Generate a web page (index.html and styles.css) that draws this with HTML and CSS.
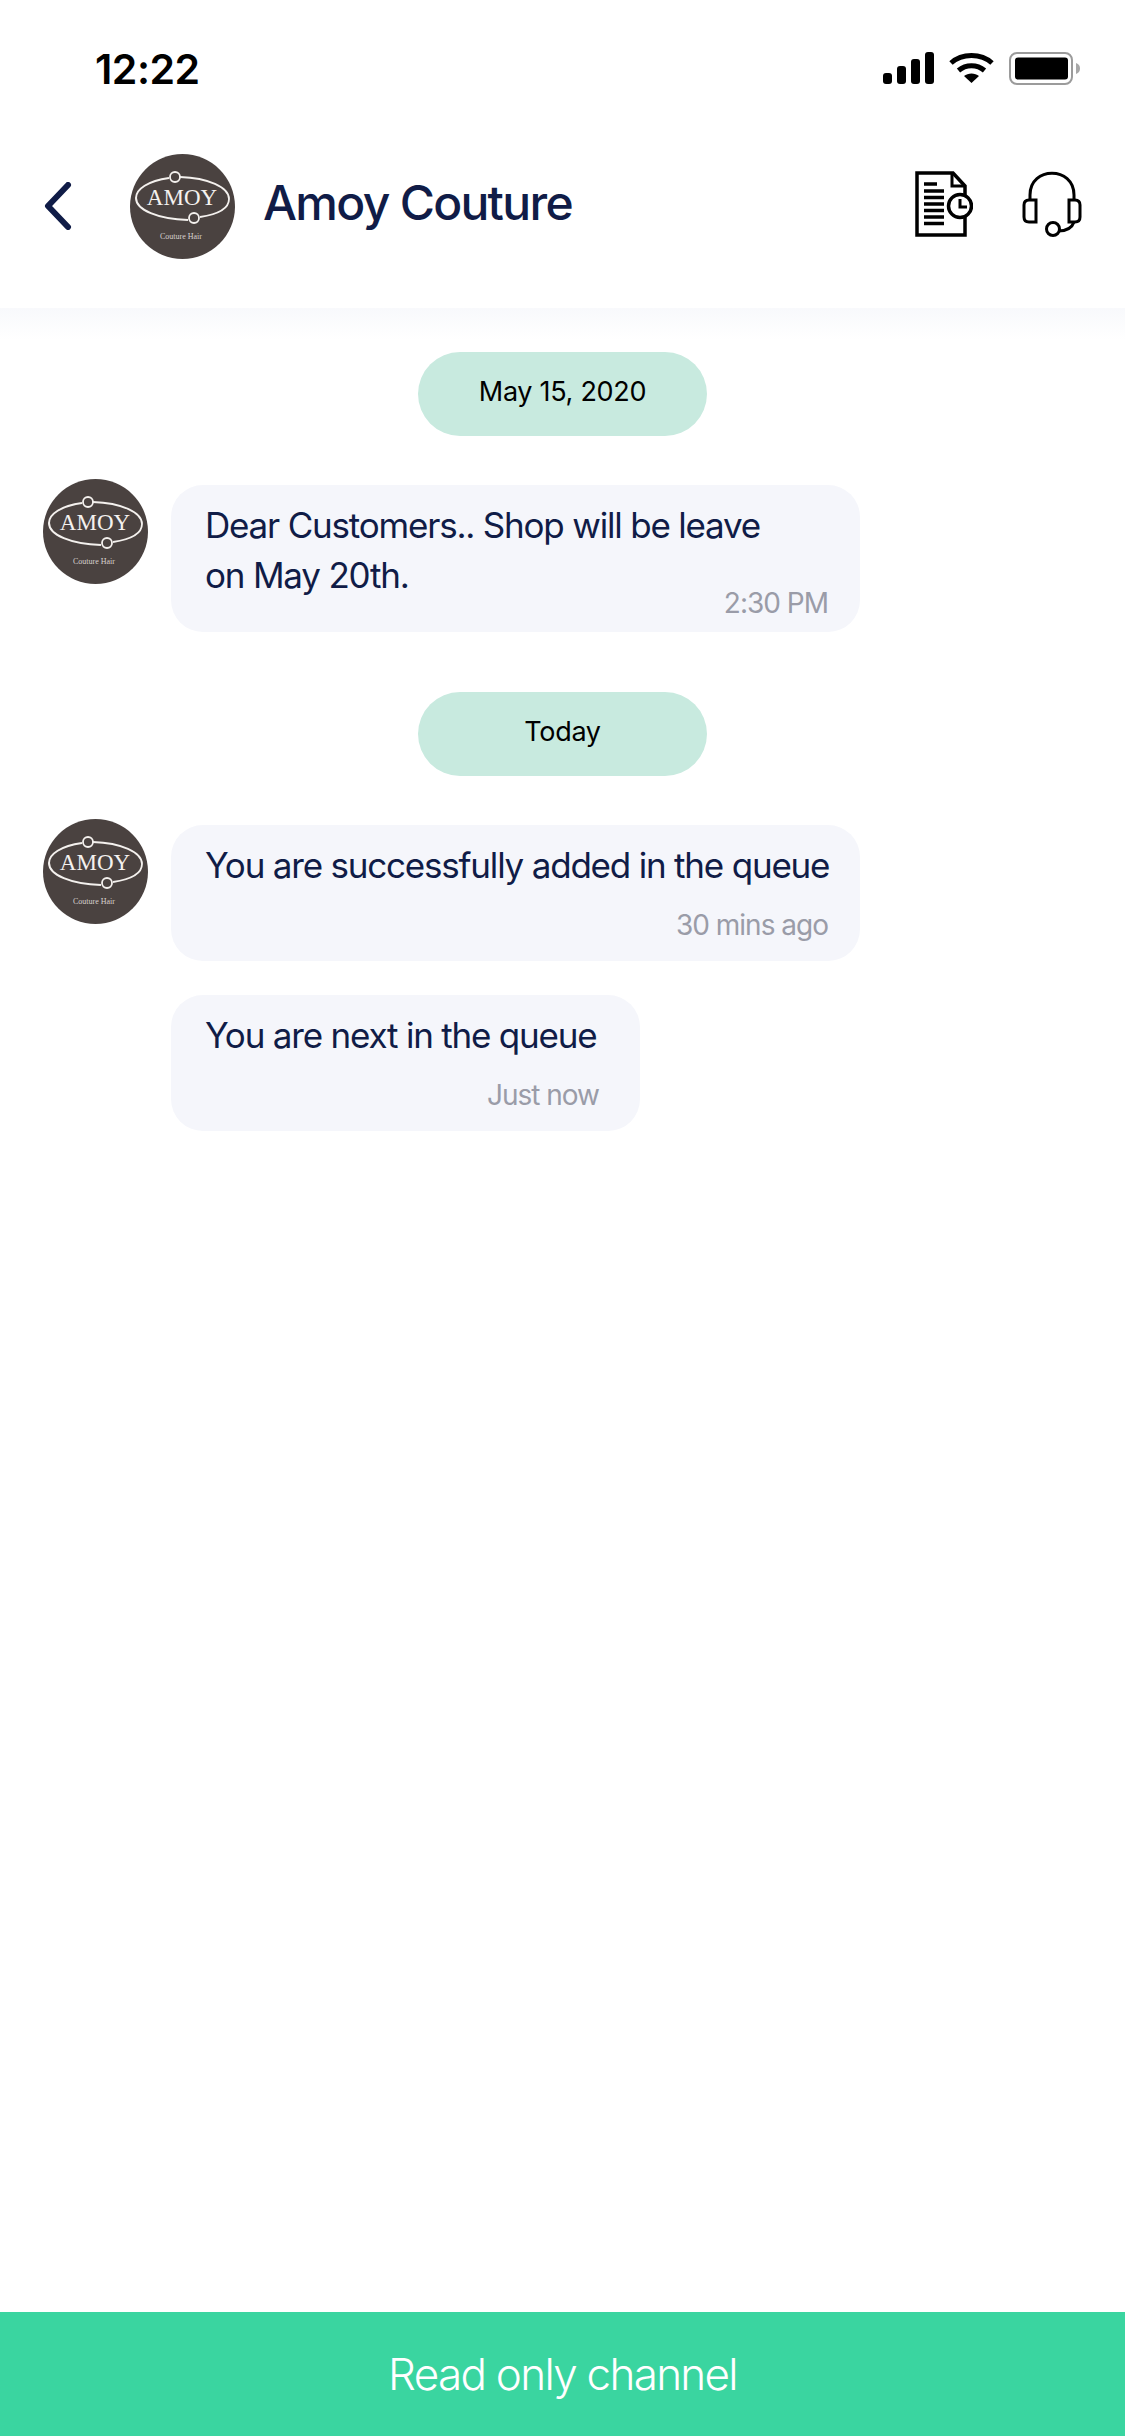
FILE: index.html
```html
<!DOCTYPE html>
<html lang="en">
<head>
    <meta charset="UTF-8">
    <meta name="viewport" content="width=device-width, initial-scale=1.0">
    <title>Amoy Couture</title>
    <link rel="stylesheet" href="styles.css">
</head>
<body>
    <div class="status-bar">
        <span class="clock">12:22</span>
        <div class="status-icons">
            <svg width="51" height="32" viewBox="0 0 51 32">
                <rect x="0" y="21" width="9" height="11" rx="3"/>
                <rect x="14" y="14" width="9" height="18" rx="3"/>
                <rect x="28" y="7" width="9" height="25" rx="3"/>
                <rect x="42" y="0" width="9" height="32" rx="3"/>
            </svg>
            <svg width="45" height="32" viewBox="0 0 45 32">
                <path d="M2 11 C13 1 32 1 43 11" fill="none" stroke="#000" stroke-width="5"/>
                <path d="M9.500 18.500 C17 12 28 12 35.500 18.500" fill="none" stroke="#000" stroke-width="5"/>
                <path d="M15 24 C19 20.500 26 20.500 30 24 L22.500 31 Z"/>
            </svg>
            <svg width="72" height="33" viewBox="0 0 72 33">
                <rect x="1" y="1" width="62" height="31" rx="7" fill="none" stroke="#9b9b9b" stroke-width="2"/>
                <rect x="6" y="5.500" width="53" height="22" rx="3"/>
                <path d="M67 11 C70 12 71 14 71 16.500 C71 19 70 21 67 22 Z" fill="#a8a8a8"/>
            </svg>
        </div>
    </div>

    <header class="top-bar">
        <svg class="back" width="28" height="48" viewBox="0 0 28 48">
            <path d="M24 3 L4 24 L24 45" fill="none" stroke="#101c47" stroke-width="6" stroke-linecap="round" stroke-linejoin="round"/>
        </svg>
        <svg class="avatar" width="105" height="105" viewBox="0 0 105 105">
            <circle cx="52.5" cy="52.5" r="52.5" fill="#4a4240"/>
            <path d="M39 24 C18 27 6 35 6 44 C6 56 28 65 58 66" fill="none" stroke="#f4f1ee" stroke-width="2"/>
            <path d="M50 23 C78 24 99 33 99 45 C99 54 90 60 70 63" fill="none" stroke="#f4f1ee" stroke-width="1.800"/>
            <circle cx="45" cy="23" r="5" fill="none" stroke="#f4f1ee" stroke-width="1.800"/>
            <circle cx="64" cy="64" r="5" fill="none" stroke="#f4f1ee" stroke-width="1.800"/>
            <text class="logo-name" x="52" y="51" text-anchor="middle">AMOY</text>
            <text class="logo-sub" x="51" y="85" text-anchor="middle">Couture Hair</text>
        </svg>
        <h1 class="shop-name">Amoy Couture</h1>
        <svg class="doc-icon" width="58" height="66" viewBox="0 0 58 66">
            <path d="M2 2 H38 L50 15 V64 H2 Z" fill="#fff" stroke="#000" stroke-width="3.500"/>
            <path d="M37 2 V15 H50" fill="none" stroke="#000" stroke-width="3"/>
            <path d="M9 13 H22 M9 20 H29 M9 26.500 H29 M9 33 H29 M9 39.500 H29 M9 46 H29 M9 52.500 H29" stroke="#000" stroke-width="3.500"/>
            <circle cx="45" cy="35" r="11.500" fill="#fff" stroke="#000" stroke-width="3.500"/>
            <path d="M45 28 V36 H52" fill="none" stroke="#000" stroke-width="3"/>
        </svg>
        <svg class="help-icon" width="60" height="66" viewBox="0 0 60 66">
            <path d="M8 29 V24 C8 -5 52 -5 52 24 V29" fill="none" stroke="#000" stroke-width="3"/>
            <path d="M14 29 H7 Q2 29 2 34 V46 Q2 51 7 51 H14 Z" fill="none" stroke="#000" stroke-width="3"/>
            <path d="M47 29 H53 Q58 29 58 34 V46 Q58 51 53 51 H47 Z" fill="none" stroke="#000" stroke-width="3"/>
            <path d="M52 51 C50 57 44 60 36 60" fill="none" stroke="#000" stroke-width="3"/>
            <circle cx="31" cy="58" r="6.500" fill="#fff" stroke="#000" stroke-width="3"/>
        </svg>
    </header>

    <main class="chat">
        <div class="date-pill">May 15, 2020</div>
        <div class="msg-row">
            <svg class="avatar" width="105" height="105" viewBox="0 0 105 105">
                <circle cx="52.5" cy="52.5" r="52.5" fill="#4a4240"/>
                <path d="M39 24 C18 27 6 35 6 44 C6 56 28 65 58 66" fill="none" stroke="#f4f1ee" stroke-width="2"/>
                <path d="M50 23 C78 24 99 33 99 45 C99 54 90 60 70 63" fill="none" stroke="#f4f1ee" stroke-width="1.800"/>
                <circle cx="45" cy="23" r="5" fill="none" stroke="#f4f1ee" stroke-width="1.800"/>
                <circle cx="64" cy="64" r="5" fill="none" stroke="#f4f1ee" stroke-width="1.800"/>
                <text class="logo-name" x="52" y="51" text-anchor="middle">AMOY</text>
                <text class="logo-sub" x="51" y="85" text-anchor="middle">Couture Hair</text>
            </svg>
            <div class="msg-list">
                <div class="bubble bubble-wrap">
                    <p class="msg-text">Dear Customers.. Shop will be leave</p>
                    <div class="msg-last">
                        <p class="msg-text">on May 20th.</p>
                        <span class="msg-time">2:30 PM</span>
                    </div>
                </div>
            </div>
        </div>

        <div class="date-pill date-pill-next">Today</div>
        <div class="msg-row">
            <svg class="avatar" width="105" height="105" viewBox="0 0 105 105">
                <circle cx="52.5" cy="52.5" r="52.5" fill="#4a4240"/>
                <path d="M39 24 C18 27 6 35 6 44 C6 56 28 65 58 66" fill="none" stroke="#f4f1ee" stroke-width="2"/>
                <path d="M50 23 C78 24 99 33 99 45 C99 54 90 60 70 63" fill="none" stroke="#f4f1ee" stroke-width="1.800"/>
                <circle cx="45" cy="23" r="5" fill="none" stroke="#f4f1ee" stroke-width="1.800"/>
                <circle cx="64" cy="64" r="5" fill="none" stroke="#f4f1ee" stroke-width="1.800"/>
                <text class="logo-name" x="52" y="51" text-anchor="middle">AMOY</text>
                <text class="logo-sub" x="51" y="85" text-anchor="middle">Couture Hair</text>
            </svg>
            <div class="msg-list">
                <div class="bubble">
                    <p class="msg-text">You are successfully added in the queue</p>
                    <span class="msg-time">30 mins ago</span>
                </div>
                <div class="bubble bubble-short">
                    <p class="msg-text">You are next in the queue</p>
                    <span class="msg-time">Just now</span>
                </div>
            </div>
        </div>
    </main>

    <footer class="read-only">Read only channel</footer>
</body>
</html>
```

FILE: styles.css
```css
* {
    box-sizing: border-box;
}

body {
    font-family: 'Inter', 'Liberation Sans', sans-serif;
    background-color: #ffffff;
    margin: 0;
    padding: 0;
    height: 2436px;
    display: flex;
    flex-direction: column;
    overflow: hidden;
}

.logo-name {
    font-family: 'Liberation Serif', serif;
    font-size: 23px;
    fill: #f4f1ee;
}

.logo-sub {
    font-family: 'Liberation Serif', serif;
    font-size: 8px;
    fill: #d8d3cf;
}

.status-bar {
    height: 110px;
    padding: 52px 44px 0 95px;
    display: flex;
    justify-content: space-between;
    align-items: flex-start;
}

.clock {
    font-size: 41px;
    font-weight: 600;
    line-height: 34px;
    letter-spacing: -0.5px;
    color: #000;
}

.status-icons {
    display: flex;
    align-items: flex-start;
    gap: 15px;
}

.top-bar {
    height: 198px;
    padding: 44px 43px 0 44px;
    display: flex;
    align-items: flex-start;
}

.back {
    margin: 28px 58px 0 0;
}

.avatar {
    flex-shrink: 0;
    display: block;
}

.shop-name {
    margin: 20px auto 0 28px;
    font-size: 48px;
    line-height: 58px;
    font-weight: 500;
    letter-spacing: -1.7px;
    color: #101c47;
}

.doc-icon {
    margin: 17px 49px 0 0;
}

.help-icon {
    margin-top: 17px;
}

.chat {
    flex: 1;
    padding: 44px 0 0 43px;
    background: linear-gradient(#f8f9fc, #ffffff 32px);
}

.date-pill {
    width: 289px;
    height: 84px;
    margin-left: 375px;
    padding-bottom: 5px;
    border-radius: 42px;
    background-color: #c8eadf;
    display: flex;
    align-items: center;
    justify-content: center;
    font-size: 27px;
    letter-spacing: -0.3px;
    color: #000;
}

.date-pill-next {
    margin-top: 60px;
}

.msg-row {
    margin-top: 43px;
    display: flex;
    align-items: flex-start;
    gap: 23px;
}

.msg-list {
    padding-top: 6px;
    display: flex;
    flex-direction: column;
    gap: 34px;
}

.bubble {
    width: 689px;
    padding: 15px 24px 16px 34px;
    border-radius: 32px;
    background-color: #f5f6fb;
}

.bubble-wrap {
    padding-bottom: 9px;
}

.bubble-short {
    width: 469px;
}

.msg-text {
    margin: 0;
    font-size: 35px;
    line-height: 50px;
    letter-spacing: -1.2px;
    color: #101c47;
}

.msg-last {
    display: flex;
    justify-content: space-between;
    align-items: flex-start;
}

.msg-time {
    display: block;
    margin: 15px 8px 0 0;
    font-size: 28px;
    line-height: 40px;
    letter-spacing: -1px;
    text-align: right;
    color: #9a9ca8;
}

.bubble-short .msg-time {
    margin-right: 17px;
}

.msg-last .msg-time {
    margin-top: 33px;
}

.read-only {
    height: 124px;
    background-color: #3ad5a0;
    display: flex;
    align-items: center;
    justify-content: center;
    font-size: 44px;
    font-weight: 300;
    letter-spacing: -1.7px;
    color: #fff;
}
```
